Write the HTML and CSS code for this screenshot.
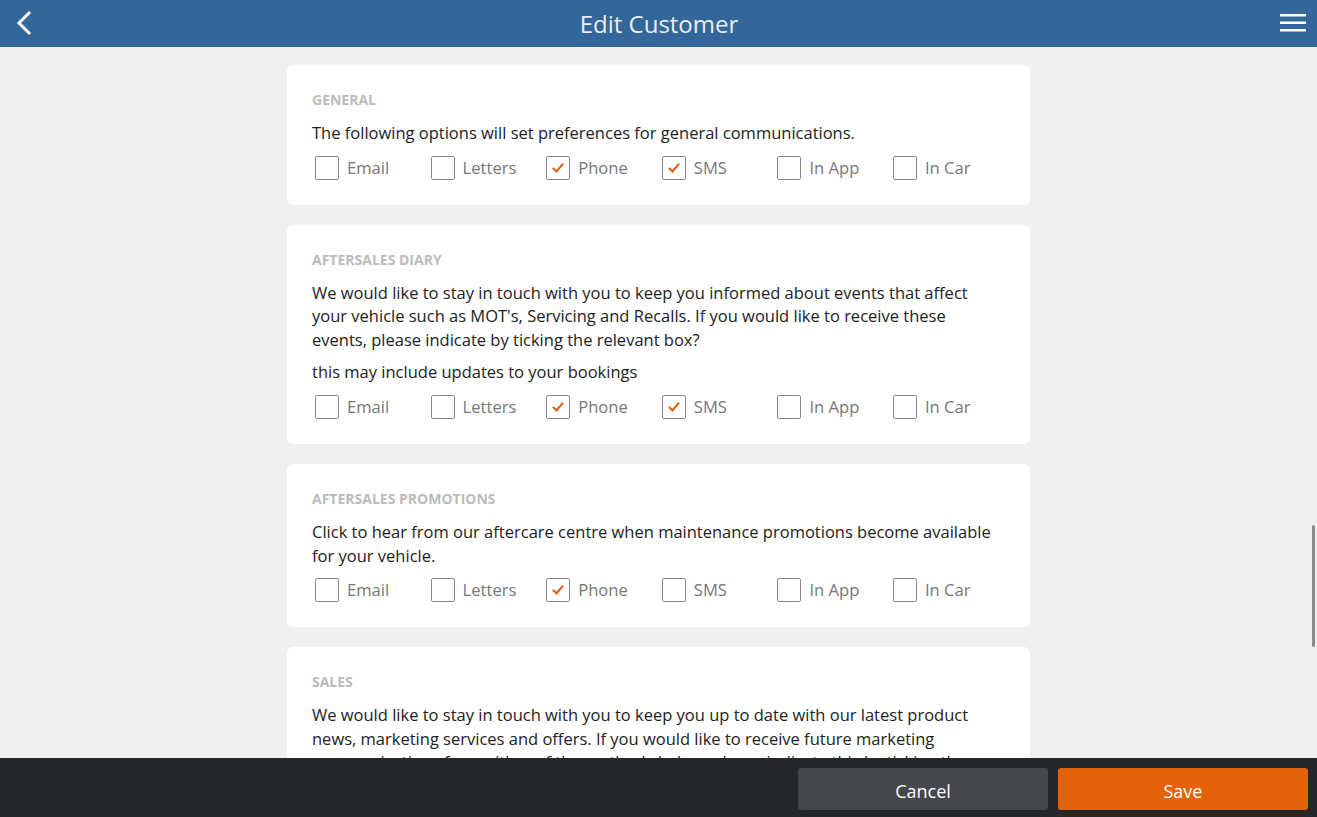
FILE: index.html
```html
<!DOCTYPE html>
<html lang="en">

<head>
    <meta charset="UTF-8">
    <meta name="viewport" content="width=device-width, initial-scale=1.0">
    <title>Edit Customer</title>
    <link rel="stylesheet" href="styles.css">
</head>

<body>
    <header class="header">
        <button class="icon-btn back-btn" aria-label="Back">
            <svg width="18" height="28" viewBox="0 0 18 28">
                <polyline points="15,3 4,14 15,25" fill="none" stroke="#fff" stroke-width="3" />
            </svg>
        </button>
        <h1>Edit Customer</h1>
        <button class="icon-btn menu-btn" aria-label="Menu">
            <svg width="28" height="24" viewBox="0 0 28 24">
                <rect x="1" y="3" width="26" height="2.5" fill="#fff" />
                <rect x="1" y="10.5" width="26" height="2.5" fill="#fff" />
                <rect x="1" y="18" width="26" height="2.5" fill="#fff" />
            </svg>
        </button>
    </header>

    <div class="main-content">
        <div class="cards">
            <section class="card">
                <h2>GENERAL</h2>
                <p>The following options will set preferences for general communications.</p>
                <div class="options">
                    <label class="option"><span class="box"></span>Email</label>
                    <label class="option"><span class="box"></span>Letters</label>
                    <label class="option"><span class="box checked"></span>Phone</label>
                    <label class="option"><span class="box checked"></span>SMS</label>
                    <label class="option"><span class="box"></span>In App</label>
                    <label class="option"><span class="box"></span>In Car</label>
                </div>
            </section>

            <section class="card">
                <h2>AFTERSALES DIARY</h2>
                <p>We would like to stay in touch with you to keep you informed about events that affect your vehicle such as MOT's, Servicing and Recalls. If you would like to receive these events, please indicate by ticking the relevant box?</p>
                <p>this may include updates to your bookings</p>
                <div class="options">
                    <label class="option"><span class="box"></span>Email</label>
                    <label class="option"><span class="box"></span>Letters</label>
                    <label class="option"><span class="box checked"></span>Phone</label>
                    <label class="option"><span class="box checked"></span>SMS</label>
                    <label class="option"><span class="box"></span>In App</label>
                    <label class="option"><span class="box"></span>In Car</label>
                </div>
            </section>

            <section class="card">
                <h2>AFTERSALES PROMOTIONS</h2>
                <p>Click to hear from our aftercare centre when maintenance promotions become available for your vehicle.</p>
                <div class="options">
                    <label class="option"><span class="box"></span>Email</label>
                    <label class="option"><span class="box"></span>Letters</label>
                    <label class="option"><span class="box checked"></span>Phone</label>
                    <label class="option"><span class="box"></span>SMS</label>
                    <label class="option"><span class="box"></span>In App</label>
                    <label class="option"><span class="box"></span>In Car</label>
                </div>
            </section>

            <section class="card">
                <h2>SALES</h2>
                <p>We would like to stay in touch with you to keep you up to date with our latest product news, marketing services and offers. If you would like to receive future marketing communications from either of the methods below, please indicate this by ticking the relevant box.</p>
                <div class="options">
                    <label class="option"><span class="box"></span>Email</label>
                    <label class="option"><span class="box"></span>Letters</label>
                    <label class="option"><span class="box"></span>Phone</label>
                    <label class="option"><span class="box"></span>SMS</label>
                    <label class="option"><span class="box"></span>In App</label>
                    <label class="option"><span class="box"></span>In Car</label>
                </div>
            </section>
        </div>
        <div class="scrollbar"></div>
    </div>

    <footer class="footer">
        <button class="btn btn-cancel">Cancel</button>
        <button class="btn btn-save">Save</button>
    </footer>
</body>

</html>
```

FILE: styles.css
```css
body {
    font-family: 'Open Sans', 'Noto Sans', sans-serif;
    background-color: #f0f0f0;
    margin: 0;
    padding: 0;
    height: 100vh;
    display: flex;
    flex-direction: column;
    overflow: hidden;
    color: #222;
}

.header {
    height: 47px;
    flex-shrink: 0;
    background-color: #336699;
    display: flex;
    align-items: center;
    justify-content: space-between;
    padding: 0 10px 0 15px;
}

.header h1 {
    margin: 0 0 0 6px;
    font-size: 24px;
    font-weight: 400;
    color: #e8eef5;
}

.icon-btn {
    background: none;
    border: none;
    padding: 0;
    display: flex;
    cursor: pointer;
}

.back-btn {
    margin-top: -2px;
}

.menu-btn {
    margin-top: -2px;
}

.main-content {
    flex: 1;
    position: relative;
    overflow: hidden;
}

.cards {
    width: 743px;
    margin: 18px auto 0;
    display: flex;
    flex-direction: column;
    gap: 20px;
}

.card {
    background-color: #fff;
    border-radius: 6px;
    padding: 26px 35px 25px 25px;
}

.card h2 {
    margin: 0 0 12px;
    font-size: 14px;
    font-weight: 700;
    color: #bbb;
    line-height: 18px;
}

.card p {
    margin: 0 0 9px;
    font-size: 16.5px;
    line-height: 23.6px;
}

.options {
    display: grid;
    grid-template-columns: repeat(6, 115.6px);
    margin-top: 11px;
    padding-left: 3px;
}

.option {
    display: flex;
    align-items: center;
    gap: 8px;
    font-size: 16.6px;
    color: #777;
    line-height: 24px;
}

.box {
    width: 22px;
    height: 22px;
    border: 1px solid #888;
    border-radius: 2px;
    position: relative;
    flex-shrink: 0;
}

.box.checked::after {
    content: "";
    position: absolute;
    left: 8px;
    top: 4px;
    width: 4px;
    height: 9px;
    border-right: 2.5px solid #e35d0c;
    border-bottom: 2.5px solid #e35d0c;
    transform: rotate(40deg);
}

.scrollbar {
    position: absolute;
    right: 2px;
    top: 478px;
    width: 3px;
    height: 122px;
    background-color: #8a8a8a;
    border-radius: 2px;
}

.footer {
    height: 59px;
    box-sizing: border-box;
    flex-shrink: 0;
    background-color: #24272c;
    display: flex;
    justify-content: flex-end;
    align-items: flex-start;
    gap: 10px;
    padding: 10px 9px 0 0;
    position: relative;
    z-index: 2;
}

.btn {
    width: 250px;
    height: 42px;
    border: none;
    border-radius: 3px;
    font-family: inherit;
    font-size: 18px;
    color: #fff;
    cursor: pointer;
    padding-top: 4px;
}

.btn-cancel {
    background-color: #44474c;
}

.btn-save {
    background-color: #e5620a;
}
```
